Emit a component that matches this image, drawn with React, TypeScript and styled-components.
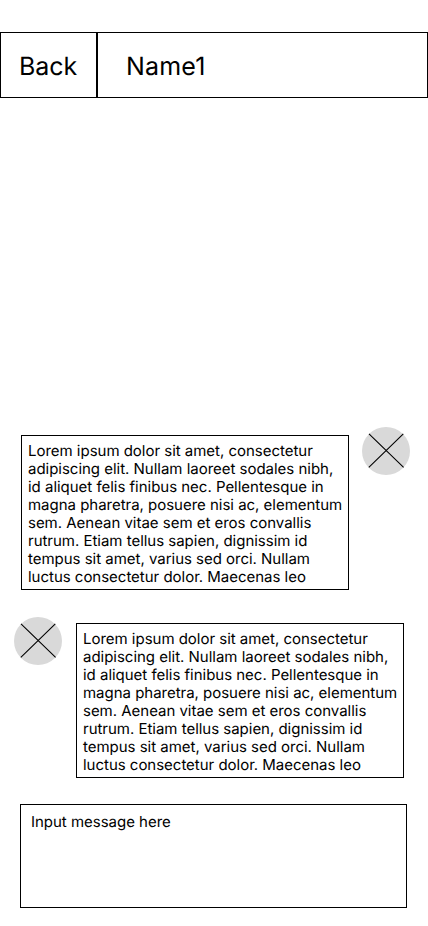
import React from "react";
import styled, { createGlobalStyle } from "styled-components";

const GlobalStyle = createGlobalStyle`
  * { box-sizing: border-box; }
  body {
    margin: 0;
    background: #fff;
    color: #000;
    font-family: Inter, sans-serif;
    text-rendering: geometricPrecision;
  }
`;

const Screen = styled.main`
  width: 428px;
  height: 926px;
  padding-top: 32px;
  display: flex;
  flex-direction: column;
  overflow: hidden;
`;

const Header = styled.header`
  display: flex;
  height: 66px;
  border: 1px solid #000;
  font-size: 25px;
  line-height: 30px;
`;

const BackButton = styled.button`
  width: 97px;
  padding: 4px 0 0 18px;
  border: 0;
  border-right: 2px solid #000;
  background: none;
  font: inherit;
  color: inherit;
  text-align: left;
  letter-spacing: -0.1px;
  text-rendering: inherit;
`;

const Title = styled.h1`
  margin: 0;
  padding: 19px 0 0 28px;
  font: inherit;
  letter-spacing: 0.2px;
`;

const Messages = styled.section`
  flex: 1;
  display: flex;
  flex-direction: column;
  justify-content: flex-end;
  gap: 27px;
  padding-bottom: 26px;
`;

const MessageRow = styled.article<{ $own: boolean }>`
  display: flex;
  flex-direction: ${(p) => (p.$own ? "row" : "row-reverse")};
  justify-content: ${(p) => (p.$own ? "flex-start" : "flex-end")};
  align-items: flex-start;
  gap: ${(p) => (p.$own ? 13 : 14)}px;
  padding-left: ${(p) => (p.$own ? 21 : 14)}px;
`;

const Bubble = styled.p<{ $top: number }>`
  width: 328px;
  height: 155px;
  margin: ${(p) => p.$top}px 0 0;
  padding: 6px 0 0 6px;
  border: 1px solid #000;
  font-size: 15px;
  line-height: 18px;
  letter-spacing: -0.02px;
  font-variant-ligatures: normal;
  white-space: pre-line;
`;

const Avatar = styled.svg`
  width: 48px;
  height: 48px;
  flex: none;
`;

const Composer = styled.textarea`
  display: block;
  width: 387px;
  height: 104px;
  margin: 0 0 18px 20px;
  padding: 8px 10px;
  border: 1px solid #000;
  border-radius: 0;
  resize: none;
  font: 15px/18px Inter, sans-serif;
  letter-spacing: -0.02px;
  text-rendering: inherit;
  &::placeholder { color: #000; opacity: 1; }
`;

const text = `Lorem ipsum dolor sit amet, consectetur
adipiscing elit. Nullam laoreet sodales nibh,
id aliquet felis finibus nec. Pellentesque in
magna pharetra, posuere nisi ac, elementum
sem. Aenean vitae sem et eros convallis
rutrum. Etiam tellus sapien, dignissim id
tempus sit amet, varius sed orci. Nullam
luctus consectetur dolor. Maecenas leo`;

const messages = [
  { id: 1, own: true, top: 8, text },
  { id: 2, own: false, top: 6, text },
];

export default function App() {
  return (
    <>
      <GlobalStyle />
      <Screen>
        <Header>
          <BackButton>Back</BackButton>
          <Title>Name1</Title>
        </Header>
        <Messages>
          {messages.map((m) => (
            <MessageRow key={m.id} $own={m.own}>
              <Bubble $top={m.top}>{m.text}</Bubble>
              <Avatar viewBox="0 0 48 48">
                <circle cx="24" cy="24" r="24" fill="#d9d9d9" />
                <path d="M7 6.8 41.6 40.4M41.3 6.8 6.8 40.4" stroke="#000" strokeWidth="1.1" />
              </Avatar>
            </MessageRow>
          ))}
        </Messages>
        <Composer placeholder="Input message here" />
      </Screen>
    </>
  );
}
